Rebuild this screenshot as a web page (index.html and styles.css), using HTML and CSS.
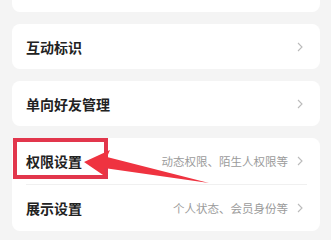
FILE: index.html
```html
<!DOCTYPE html>
<html lang="zh-CN">
<head>
    <meta charset="UTF-8">
    <meta name="viewport" content="width=device-width, initial-scale=1.0">
    <title>设置</title>
    <link rel="stylesheet" href="styles.css">
</head>
<body>
    <div class="page">
        <div class="card card-cut"></div>

        <div class="card">
            <div class="row">
                <span class="label">互动标识</span>
                <span class="extra"><svg class="chev" viewBox="0 0 6 10"><polyline points="1,1 5,5 1,9"/></svg></span>
            </div>
        </div>

        <div class="card">
            <div class="row">
                <span class="label">单向好友管理</span>
                <span class="extra"><svg class="chev" viewBox="0 0 6 10"><polyline points="1,1 5,5 1,9"/></svg></span>
            </div>
        </div>

        <div class="card">
            <div class="row row-tall">
                <span class="label">权限设置</span>
                <span class="extra"><span class="hint">动态权限、陌生人权限等</span><svg class="chev" viewBox="0 0 6 10"><polyline points="1,1 5,5 1,9"/></svg></span>
            </div>
            <div class="divider"></div>
            <div class="row row-tall">
                <span class="label">展示设置</span>
                <span class="extra"><span class="hint">个人状态、会员身份等</span><svg class="chev" viewBox="0 0 6 10"><polyline points="1,1 5,5 1,9"/></svg></span>
            </div>
        </div>

        <!-- annotation on top of the screenshot -->
        <div class="mark-box"></div>
        <svg class="mark-arrow" width="331" height="240" viewBox="0 0 331 240">
            <polygon points="84,162 110,150 107,157 209,183 104,168 106,177"/>
        </svg>
    </div>
</body>
</html>
```

FILE: styles.css
```css
body {
    margin: 0;
    background: #f4f4f4;
    font-family: "Noto Sans CJK SC", "Noto Sans", sans-serif;
}

.page {
    position: relative;
    padding: 0 11px 12px 12px;
    display: flex;
    flex-direction: column;
    gap: 11px;
}

.card {
    background: #fff;
    border-radius: 8px;
}

.card-cut {
    height: 12px;
    border-radius: 0 0 8px 8px;
}

.card + .card {
    margin-top: 1px;
}

.row {
    height: 45px;
    display: flex;
    align-items: center;
    justify-content: space-between;
    padding: 0 17px 0 14px;
}

.row-tall {
    height: 46px;
}

.label {
    font-size: 14px;
    font-weight: 600;
    color: #222;
}

.extra {
    display: flex;
    align-items: center;
    gap: 9px;
}

.hint {
    font-size: 11.5px;
    color: #9b9b9b;
}

.chev {
    width: 6px;
    height: 10px;
    fill: none;
    stroke: #bbb;
    stroke-width: 1.1;
}

.divider {
    height: 1px;
    background: #f0f0f0;
    margin: 0 13px 0 14px;
}

.mark-box {
    position: absolute;
    left: 13px;
    top: 138px;
    width: 87px;
    height: 33px;
    border: 4px solid #e2364c;
}

.mark-arrow {
    position: absolute;
    left: 0;
    top: 0;
}

.mark-arrow polygon {
    fill: #ef3340;
}
```
